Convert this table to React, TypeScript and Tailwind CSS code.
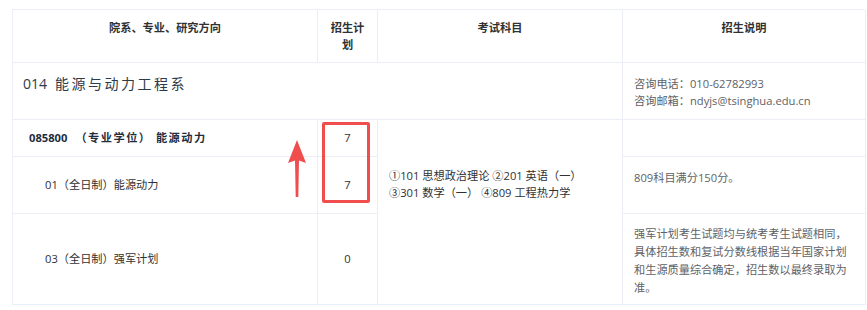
import React from 'react';

const font = { fontFamily: '"Open Sans", "Noto Sans CJK SC", sans-serif' };

export default function App() {
  return (
    <div className="w-[867px] h-[310px] bg-white overflow-hidden" style={font}>
      <div className="relative ml-[12px] mt-[9px] w-[853px]">
        <div className="grid grid-cols-[305px_60px_245px_243px] grid-rows-[53px_57px_37px_57px_91px] border-t border-l border-[#ebeef5] text-[11.2px] text-[#606266]">
          {/* header */}
          <div className="border-r border-b border-[#ebeef5] pt-[9px] text-center font-bold text-[#303133] leading-[17px]">
            院系、专业、研究方向
          </div>
          <div className="border-r border-b border-[#ebeef5] pt-[9px] text-center font-bold text-[#303133] leading-[17px]">
            招生计<br />划
          </div>
          <div className="border-r border-b border-[#ebeef5] pt-[9px] text-center font-bold text-[#303133] leading-[17px]">
            考试科目
          </div>
          <div className="border-r border-b border-[#ebeef5] pt-[9px] text-center font-bold text-[#303133] leading-[17px]">
            招生说明
          </div>

          {/* department */}
          <div className="col-span-3 border-r border-b border-[#ebeef5] pl-[10px] pt-[10px] text-[14px] leading-[22px] text-[#2c3a4a]">
            014<span className="ml-[8px] tracking-[2.5px]">能源与动力工程系</span>
          </div>
          <div className="border-r border-b border-[#ebeef5] pl-[11px] pt-[12px] leading-[17px]">
            <div>咨询电话：010-62782993</div>
            <div>咨询邮箱：ndyjs@tsinghua.edu.cn</div>
          </div>

          {/* major */}
          <div className="border-r border-b border-[#ebeef5] pl-[16px] flex items-center font-bold text-[#1f2d3d]">
            085800<span className="ml-[8px] tracking-[1.5px]">（专业学位） 能源动力</span>
          </div>
          <div className="border-r border-b border-[#ebeef5] flex items-center justify-center text-[#303133]">7</div>
          <div className="row-span-3 border-r border-b border-[#ebeef5] pl-[11px] pt-[47px] leading-[17px] text-[#303133]">
            <div>①101 思想政治理论 ②201 英语（一）</div>
            <div>③301 数学（一） ④809 工程热力学</div>
          </div>
          <div className="border-r border-b border-[#ebeef5]" />

          {/* full-time */}
          <div className="border-r border-b border-[#ebeef5] pl-[32px] flex items-center text-[#303133]">
            01（全日制）能源动力
          </div>
          <div className="border-r border-b border-[#ebeef5] flex items-center justify-center text-[#303133]">7</div>
          <div className="border-r border-b border-[#ebeef5] pl-[11px] pt-[12px] leading-[17px]">
            809科目满分150分。
          </div>

          {/* strong army */}
          <div className="border-r border-b border-[#ebeef5] pl-[32px] flex items-center text-[#303133]">
            03（全日制）强军计划
          </div>
          <div className="border-r border-b border-[#ebeef5] flex items-center justify-center text-[#303133]">0</div>
          <div className="border-r border-b border-[#ebeef5] pl-[11px] pt-[11px] leading-[18px]">
            强军计划考生试题均与统考考生试题相同，<br />
            具体招生数和复试分数线根据当年国家计划<br />
            和生源质量综合确定，招生数以最终录取为<br />
            准。
          </div>
        </div>

        {/* annotation: red box */}
        <div className="absolute left-[310px] top-[113px] w-[48px] h-[81px] border-[3px] border-[#f04e4e] rounded-[2px]" />
        {/* annotation: arrow */}
        <svg className="absolute left-[276px] top-[131px]" width="18" height="57" viewBox="0 0 18 57">
          <polygon points="9,0 18,23 11,20.5 10.3,57 7.7,57 7,20.5 0,23" fill="#f04e4e" />
        </svg>
      </div>
    </div>
  );
}
